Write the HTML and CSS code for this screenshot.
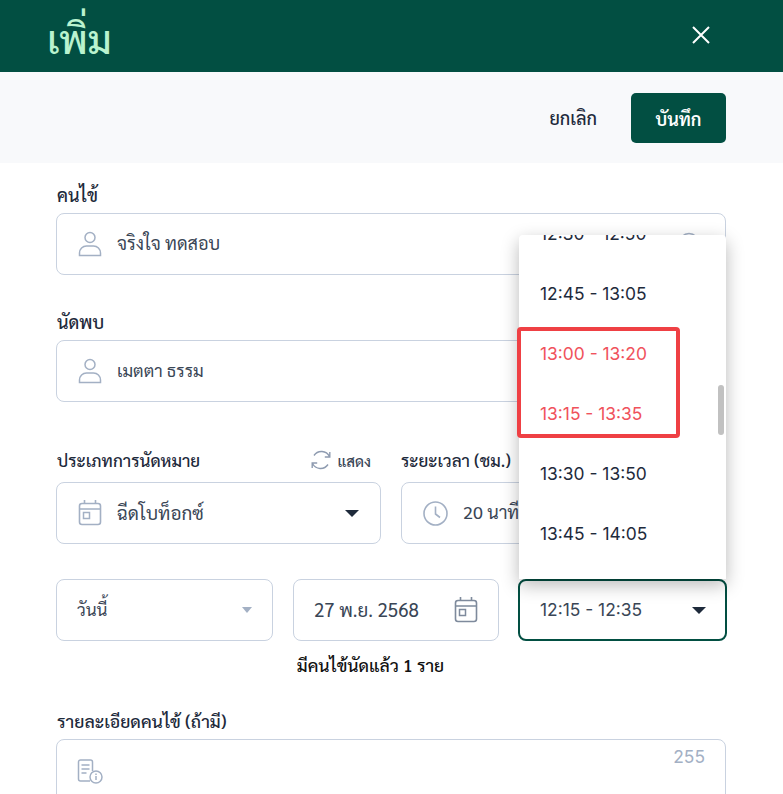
FILE: index.html
```html
<!DOCTYPE html>
<html lang="th">
<head>
<meta charset="utf-8">
<title>เพิ่ม</title>
<link rel="stylesheet" href="styles.css">
</head>
<body>
<header class="top">
  <h1 class="title">เพิ่ม</h1>
  <svg class="close" width="20" height="20" viewBox="0 0 20 20"><path d="M2 2 18 18M18 2 2 18" stroke="#fff" stroke-width="2" fill="none"/></svg>
</header>
<div class="actions">
  <button class="btn-ghost">ยกเลิก</button>
  <button class="btn-save">บันทึก</button>
</div>
<main class="form">
  <section class="group g1">
    <label class="label">คนไข้</label>
    <div class="field">
      <svg class="ico" width="24" height="26" viewBox="0 0 24 26"><circle cx="12" cy="6.5" r="5" fill="none" stroke="#a3b0c4" stroke-width="1.5"/><path d="M1.5 24.5v-2.5a7 7 0 0 1 7-7h7a7 7 0 0 1 7 7v2.5z" fill="none" stroke="#a3b0c4" stroke-width="1.5"/></svg>
      <span class="val">จริงใจ ทดสอบ</span>
      <svg class="clear" width="22" height="22" viewBox="0 0 22 22"><circle cx="11" cy="11" r="9.5" fill="none" stroke="#a3b0c4" stroke-width="1.5"/></svg>
    </div>
  </section>
  <section class="group g2">
    <label class="label">นัดพบ</label>
    <div class="field">
      <svg class="ico" width="24" height="26" viewBox="0 0 24 26"><circle cx="12" cy="6.5" r="5" fill="none" stroke="#a3b0c4" stroke-width="1.5"/><path d="M1.5 24.5v-2.5a7 7 0 0 1 7-7h7a7 7 0 0 1 7 7v2.5z" fill="none" stroke="#a3b0c4" stroke-width="1.5"/></svg>
      <span class="val v-narrow">เมตตา ธรรม</span>
    </div>
  </section>
  <section class="two g3">
    <div class="col">
      <div class="label-row">
        <label class="label tight">ประเภทการนัดหมาย</label>
        <span class="refresh">
          <svg width="20" height="20" viewBox="0 0 20 20"><path d="M18.5 6.5A9 9 0 0 0 3 5.5M1.5 13.5A9 9 0 0 0 17 14.5M18.8 2v5h-5M1.2 18v-5h5" fill="none" stroke="#8e9bb0" stroke-width="1.4"/></svg>
          แสดง
        </span>
      </div>
      <div class="field">
        <svg class="ico" width="24" height="26" viewBox="0 0 24 26"><rect x="1.5" y="3.5" width="21" height="21" rx="2.5" fill="none" stroke="#a3b0c4" stroke-width="1.6"/><path d="M1.5 9h21M6.5 0v3.5M17.5 0v3.5" stroke="#a3b0c4" stroke-width="1.6" fill="none"/><rect x="5.5" y="12.5" width="6" height="6" fill="none" stroke="#a3b0c4" stroke-width="1.5"/></svg>
        <span class="val v-wide">ฉีดโบท็อกซ์</span>
        <span class="caret"></span>
      </div>
    </div>
    <div class="col">
      <div class="label-row"><label class="label tight flush">ระยะเวลา (ชม.)</label></div>
      <div class="field">
        <svg class="ico" width="25" height="25" viewBox="0 0 25 25"><circle cx="12.5" cy="12.5" r="11.5" fill="none" stroke="#a3b0c4" stroke-width="1.6"/><path d="M12.5 5.5v7.5l4.5 3.5" fill="none" stroke="#a3b0c4" stroke-width="1.6"/></svg>
        <span class="val">20 นาที</span>
      </div>
    </div>
  </section>
  <section class="three g4">
    <div class="field slim f-day">
      <span class="val v-small">วันนี้</span>
      <span class="caret muted"></span>
    </div>
    <div class="field slim f-date">
      <span class="val v-wide">27 พ.ย. 2568</span>
      <svg class="ico-end" width="24" height="26" viewBox="0 0 24 26"><rect x="1.5" y="3.5" width="21" height="21" rx="2.5" fill="none" stroke="#7e8a9c" stroke-width="1.6"/><path d="M1.5 9h21M6.5 0v3.5M17.5 0v3.5" stroke="#7e8a9c" stroke-width="1.6" fill="none"/><rect x="5.5" y="12.5" width="6" height="6" fill="none" stroke="#7e8a9c" stroke-width="1.5"/></svg>
    </div>
    <div class="field slim f-time">
      <span class="val time">12:15 - 12:35</span>
      <span class="caret"></span>
    </div>
  </section>
  <p class="note">มีคนไข้นัดแล้ว 1 ราย</p>
  <section class="group g5">
    <label class="label semi-tight">รายละเอียดคนไข้ (ถ้ามี)</label>
    <div class="area">
      <svg class="area-ico" width="26" height="26" viewBox="0 0 26 26"><path d="M13 22H3.5a2 2 0 0 1-2-2V3a2 2 0 0 1 2-2h10a2 2 0 0 1 2 2v9" fill="none" stroke="#a3b0c4" stroke-width="1.5"/><path d="M4.5 6h8M4.5 10h8M4.5 14h5" stroke="#a3b0c4" stroke-width="1.5"/><circle cx="19" cy="18" r="6" fill="#fff" stroke="#a3b0c4" stroke-width="1.5"/><path d="M19 17v4M19 14.5v1.4" stroke="#a3b0c4" stroke-width="1.5"/></svg>
      <span class="count">255</span>
    </div>
  </section>
</main>
<div class="menu">
  <ul class="menu-list">
    <li class="opt">12:30 - 12:50</li>
    <li class="opt">12:45 - 13:05</li>
    <li class="opt off">13:00 - 13:20</li>
    <li class="opt off">13:15 - 13:35</li>
    <li class="opt">13:30 - 13:50</li>
    <li class="opt">13:45 - 14:05</li>
  </ul>
  <span class="thumb"></span>
</div>
<div class="mark"></div>
</body>
</html>
```
FILE: styles.css
```css
* { box-sizing: border-box; }
html, body { margin: 0; padding: 0; }
body {
  width: 783px;
  height: 794px;
  overflow: hidden;
  position: relative;
  background: #fff;
  font-family: Sarabun, "Noto Sans", sans-serif;
  color: #1e2a3b;
}
.top {
  height: 72px;
  background: #024f42;
  display: flex;
  align-items: center;
  justify-content: space-between;
  padding: 0 72px 0 47px;
}
.title {
  margin: 0;
  padding-top: 3px;
  font-size: 39px;
  line-height: 69px;
  font-weight: 500;
  color: #b9f3cf;
}
.close { display: block; margin-top: -2px; }
.actions {
  height: 91px;
  background: #f8f9fb;
  display: flex;
  align-items: center;
  justify-content: flex-end;
  padding: 0 57px 0 0;
  gap: 34px;
}
.btn-ghost, .btn-save {
  font: inherit;
  font-size: 18px;
  border: 0;
  padding: 0;
}
.btn-ghost { background: none; color: #1e2a3b; font-weight: 500; }
.btn-save {
  width: 95px;
  height: 50px;
  margin-top: 1px;
  background: #024f42;
  color: #fff;
  border-radius: 5px;
  font-weight: 600;
}
.form { padding: 0 57px 0 56px; }
.label {
  display: block;
  padding-left: 1px;
  font-size: 18px;
  line-height: 24px;
  font-weight: 500;
  color: #1e2a3b;
}
.label.tight { font-size: 17px; }
.label.semi-tight { font-size: 17.6px; }
.label.flush { padding-left: 0; }
.group .label { margin-bottom: 6px; }
.g1 { padding-top: 20px; }
.g2 { padding-top: 35px; }
.field {
  height: 62px;
  border: 1px solid #c9d2e0;
  border-radius: 8px;
  display: flex;
  align-items: center;
  padding: 0 21px;
  gap: 15px;
  background: #fff;
  position: relative;
}
.val {
  padding-bottom: 3px;
  font-size: 18px;
  color: #3a4656;
  white-space: nowrap;
}
.val.v-narrow { font-size: 17.4px; }
.val.v-wide { font-size: 18.8px; }
.val.v-small { font-size: 17px; }
.val.time {
  padding-bottom: 2px;
  font-family: Inter, sans-serif;
  font-size: 17.4px;
}
.ico { flex: none; display: block; }
.clear { position: absolute; right: 25px; top: 18px; }
.two {
  display: grid;
  grid-template-columns: 325px 325px;
  gap: 20px;
  padding-top: 46px;
}
.label-row {
  display: flex;
  justify-content: space-between;
  align-items: center;
  height: 24px;
  margin-bottom: 10px;
  padding-right: 10px;
}
.refresh {
  display: flex;
  align-items: center;
  gap: 6px;
  font-size: 15px;
  font-weight: 500;
  color: #3a4656;
}
.caret {
  margin-left: auto;
  width: 0;
  height: 0;
  border-left: 7px solid transparent;
  border-right: 7px solid transparent;
  border-top: 7px solid #1e2a3b;
}
.caret.muted {
  border-left-width: 5px;
  border-right-width: 5px;
  border-top: 6px solid #a3b0c4;
}
.three {
  display: grid;
  grid-template-columns: 217px 206px 209px;
  gap: 20px;
  padding-top: 35px;
  width: 671px;
}
.slim { padding: 0 20px; gap: 0; }
.ico-end { margin-left: auto; display: block; }
.f-time {
  margin: 0 1px 0 -1px;
  padding-right: 19px;
  border: 2px solid #024f42;
}
.note {
  margin: 12px 0 0;
  width: 629px;
  text-align: center;
  font-size: 17.5px;
  line-height: 24px;
  font-weight: 500;
  color: #111;
}
.g5 { padding-top: 32px; }
.area {
  height: 100px;
  border: 1px solid #c9d2e0;
  border-radius: 8px;
  position: relative;
}
.area-ico { position: absolute; left: 20px; top: 19px; }
.count {
  position: absolute;
  right: 20px;
  top: 6px;
  font-family: Inter, sans-serif;
  font-size: 17.4px;
  color: #a3b0c4;
}
.menu {
  position: absolute;
  left: 519px;
  top: 235px;
  width: 207px;
  height: 344px;
  background: #fff;
  border-radius: 4px 4px 0 0;
  box-shadow: 0 6px 18px rgba(0, 0, 0, .28);
  overflow: hidden;
}
.menu-list {
  list-style: none;
  margin: -31px 0 0;
  padding: 0;
}
.opt {
  height: 60px;
  line-height: 60px;
  padding-left: 21px;
  font-family: Inter, sans-serif;
  font-size: 17.4px;
  color: #1e2a3b;
}
.opt.off { color: #f0525c; }
.thumb {
  position: absolute;
  right: 2px;
  top: 150px;
  width: 6px;
  height: 50px;
  border-radius: 3px;
  background: #c1c1c1;
}
.mark {
  position: absolute;
  left: 516.5px;
  top: 327px;
  width: 163px;
  height: 111px;
  border: 4px solid #ef4044;
  border-radius: 4px;
}
```
